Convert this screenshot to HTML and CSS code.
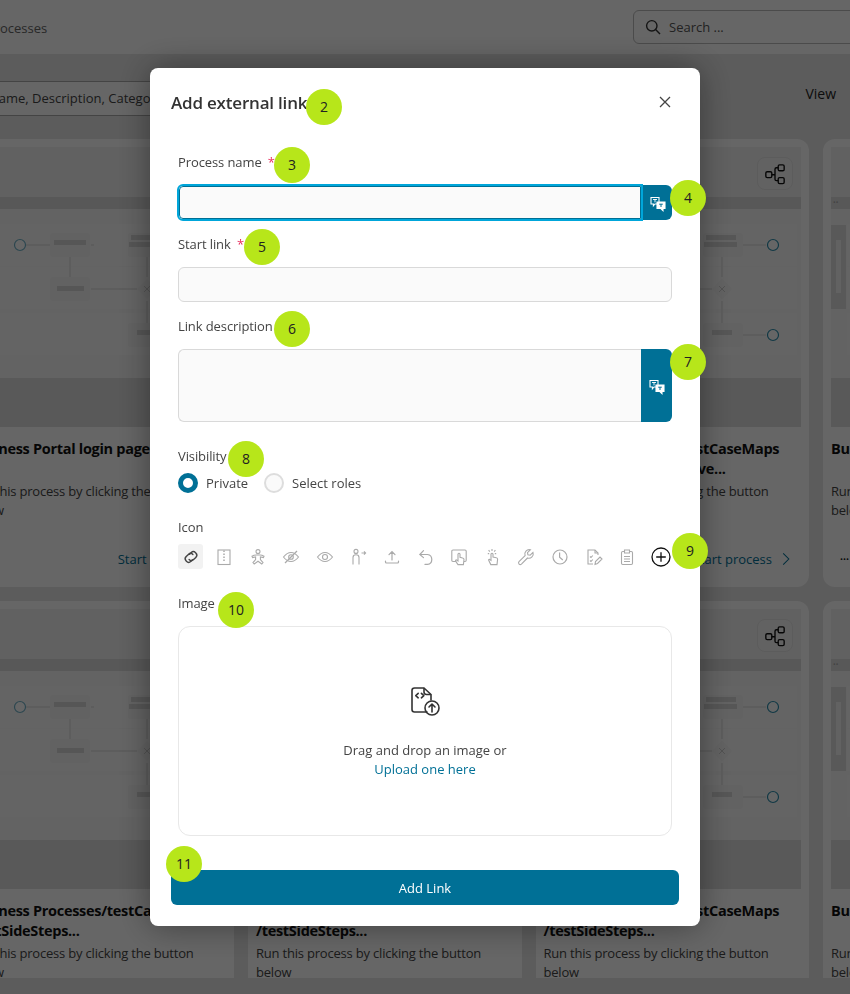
FILE: index.html
```html
<!DOCTYPE html>
<html>
<head>
    <title>Processes</title>
    <link rel="stylesheet" href="styles.css">
</head>
<body>
    <svg class="sprite" xmlns="http://www.w3.org/2000/svg">
        <symbol id="diagram" viewBox="0 0 258 169">
            <rect x="0" y="16" width="15" height="84" fill="#dedede"/>
            <rect x="5" y="31" width="5" height="53" fill="#f6f6f6"/>
            <rect x="16" y="15" width="237" height="42" fill="#fbfbfb"/>
            <rect x="16" y="58" width="237" height="42" fill="#fbfbfb"/>
            <rect x="16" y="104" width="237" height="42" fill="#fbfbfb"/>
            <g stroke="#e4e4e4" stroke-width="1.5" fill="none">
                <path d="M57 36H81M101 48V68M122 80H168M178 48V68M178 92V114M122 36H125M198 36H222M198 126H222"/>
            </g>
            <g fill="#f6f6f6">
                <rect x="81" y="24" width="40" height="24" rx="3"/>
                <rect x="81" y="68" width="40" height="24" rx="3"/>
                <rect x="159" y="24" width="40" height="24" rx="3"/>
                <rect x="159" y="114" width="40" height="24" rx="3"/>
                <path d="M178 70l10 10-10 10-10-10z"/>
            </g>
            <g fill="#d8d8d8">
                <rect x="85" y="31" width="32" height="5"/>
                <rect x="88" y="77" width="27" height="5"/>
                <rect x="162" y="26" width="30" height="5"/>
                <rect x="160" y="33" width="33" height="5"/>
                <rect x="168" y="121" width="20" height="5"/>
            </g>
            <path d="M175 77l6 6M181 77l-6 6" stroke="#cfcfcf" stroke-width="1" fill="none"/>
            <circle cx="51" cy="36" r="5.5" fill="#fff" stroke="#6fb0c6" stroke-width="1.2"/>
            <circle cx="229" cy="36" r="5.5" fill="#fff" stroke="#2b8cab" stroke-width="1.2"/>
            <circle cx="229" cy="126" r="5.5" fill="#fff" stroke="#2b8cab" stroke-width="1.2"/>
        </symbol>
        <symbol id="tree" viewBox="0 0 24 24">
            <g fill="none" stroke="currentColor" stroke-width="1.5">
                <rect x="2" y="9.5" width="6.5" height="6.5" rx="1.5"/>
                <rect x="15.5" y="2" width="6.5" height="6.5" rx="1.5"/>
                <rect x="15.5" y="16" width="6.5" height="6.5" rx="1.5"/>
                <path d="M8.5 12.8H12M15.5 5.2H13.5Q12 5.2 12 6.7V17.7Q12 19.2 13.5 19.2H15.5"/>
            </g>
        </symbol>
        <symbol id="translate" viewBox="0 0 16 16">
            <g fill="none" stroke="#fff" stroke-width="1.1">
                <path d="M1 1.5H9V8H5L3.4 9.8V8H1z"/>
                <path d="M7 6H15V12.5H13V14.6L10.8 12.5H7z" fill="#fff"/>
                <path d="M3 3.5H7M5 3V6.4M9 8H13M11 10.8L9.5 8.4" stroke-width=".9"/>
                <path d="M9.2 8.2H12.8M11 8.2V11" stroke="#007096" stroke-width="1"/>
            </g>
        </symbol>
        <symbol id="i-link" viewBox="0 0 18 18">
            <g fill="none" stroke="currentColor" stroke-width="1.4" stroke-linecap="round">
                <path d="M7.6 6.2l1.5-1.5a3.2 3.2 0 0 1 4.5 0l.2.2a3.2 3.2 0 0 1 0 4.5l-2.2 2.2a3.2 3.2 0 0 1-4.5 0"/>
                <path d="M10.4 11.8l-1.5 1.5a3.2 3.2 0 0 1-4.5 0l-.2-.2a3.2 3.2 0 0 1 0-4.5l2.2-2.2a3.2 3.2 0 0 1 4.5 0"/>
            </g>
        </symbol>
        <symbol id="i-zip" viewBox="0 0 18 18">
            <g fill="none" stroke="currentColor" stroke-width="1.1">
                <rect x="3" y="2" width="12" height="14.5"/>
                <path d="M9 2.5V4M9 5.5V7M9 8.5V10M9 11.5V13" stroke-width="1.5"/>
            </g>
        </symbol>
        <symbol id="i-body" viewBox="0 0 18 18">
            <g fill="none" stroke="currentColor" stroke-width="1.1">
                <circle cx="9" cy="3.6" r="2"/>
                <path d="M3 8.2Q5 7 7 7H11Q13 7 15 8.2L14.4 9.6L11.4 9V11.5L14 14.6L12.8 16L9 13.2L5.2 16L4 14.6L6.6 11.5V9L3.6 9.6z"/>
            </g>
        </symbol>
        <symbol id="i-eye-off" viewBox="0 0 18 18">
            <g fill="none" stroke="currentColor" stroke-width="1.1">
                <path d="M1.5 9Q5 4.5 9 4.5T16.5 9Q13 13.5 9 13.5T1.5 9z"/>
                <circle cx="9" cy="9" r="2.3"/>
                <path d="M3 15L15 3" stroke-width="1.2"/>
            </g>
        </symbol>
        <symbol id="i-eye" viewBox="0 0 18 18">
            <g fill="none" stroke="currentColor" stroke-width="1.1">
                <path d="M1.5 9Q5 4.5 9 4.5T16.5 9Q13 13.5 9 13.5T1.5 9z"/>
                <circle cx="9" cy="9" r="2.5"/>
            </g>
        </symbol>
        <symbol id="i-person" viewBox="0 0 18 18">
            <g fill="none" stroke="currentColor" stroke-width="1.1">
                <circle cx="7" cy="3.4" r="2"/>
                <path d="M4 16.5V9.5Q4 6.8 7 6.8T10 9.5V16.5"/>
                <path d="M12.5 5H16.5M15 3.4L16.6 5L15 6.6"/>
            </g>
        </symbol>
        <symbol id="i-upload" viewBox="0 0 18 18">
            <g fill="none" stroke="currentColor" stroke-width="1.2" stroke-linecap="round">
                <path d="M9 12V4M6 6.6L9 3.6L12 6.6"/>
                <path d="M2.5 13V14Q2.5 15 3.5 15H14.5Q15.5 15 15.5 14V13"/>
            </g>
        </symbol>
        <symbol id="i-undo" viewBox="0 0 18 18">
            <g fill="none" stroke="currentColor" stroke-width="1.2" stroke-linecap="round">
                <path d="M3.5 6.5H10.5A5 5 0 0 1 10.5 16.4H8"/>
                <path d="M6.5 2.6L2.8 6.5L6.5 9.6"/>
            </g>
        </symbol>
        <symbol id="i-touch" viewBox="0 0 18 18">
            <g fill="none" stroke="currentColor" stroke-width="1.1">
                <path d="M7 13.5H3Q1.8 13.5 1.8 12.3V3.2Q1.8 2 3 2H15Q16.2 2 16.2 3.2V12.3Q16.2 13.5 15 13.5H14"/>
                <path d="M8 6V13L6.6 12Q5.4 11.6 5.6 13L8 16.6H13.4L14 11.5Q14 10.2 12.6 10L10 9.4V6Q9 4.6 8 6z" fill="#fff"/>
            </g>
        </symbol>
        <symbol id="i-tap" viewBox="0 0 18 18">
            <g fill="none" stroke="currentColor" stroke-width="1.1">
                <path d="M7 6V12.4L5.6 11.4Q4.2 11 4.8 12.6L6.8 16.6H13L13.6 11.2Q13.6 10 12.4 9.8L9 9.1V6Q8 4.4 7 6z"/>
                <path d="M8 1V3M4.6 2.2L5.8 3.6M11.4 2.2L10.2 3.6M3.8 5.6H5.2M10.8 5.6H12.2"/>
            </g>
        </symbol>
        <symbol id="i-wrench" viewBox="0 0 18 18">
            <path d="M16 4.4L13.2 7.2L10.9 6.8L10.5 4.6L13.4 1.8A4.4 4.4 0 0 0 8.1 7.6L2 13.7A1.7 1.7 0 0 0 4.4 16.1L10.5 10A4.4 4.4 0 0 0 16 4.4z" fill="none" stroke="currentColor" stroke-width="1.1"/>
        </symbol>
        <symbol id="i-clock" viewBox="0 0 18 18">
            <g fill="none" stroke="currentColor" stroke-width="1.2">
                <circle cx="9" cy="9" r="7"/>
                <path d="M8.6 4.6V9.2L11.8 12"/>
            </g>
        </symbol>
        <symbol id="i-edit" viewBox="0 0 18 18">
            <g fill="none" stroke="currentColor" stroke-width="1.1">
                <path d="M13 7V5L10 2H3V16H8"/>
                <path d="M10 2V5H13"/>
                <path d="M5 8.5L6 9.5L7.8 7.5M5 12.5L6 13.5L7.8 11.5"/>
                <path d="M10 16.5L10.5 13.5L15 9L17 11L12.5 15.5z"/>
            </g>
        </symbol>
        <symbol id="i-clip" viewBox="0 0 18 18">
            <g fill="none" stroke="currentColor" stroke-width="1.1">
                <rect x="3.5" y="3.5" width="11" height="13" rx="1.2"/>
                <path d="M6.5 3.5V2H11.5V3.5V5H6.5z" fill="#fff"/>
                <path d="M6 8.5H12M6 11H12M6 13.5H12"/>
            </g>
        </symbol>
        <symbol id="i-plus" viewBox="0 0 20 20">
            <g fill="none" stroke="#111" stroke-width="1.3">
                <circle cx="10" cy="10" r="9"/>
                <path d="M10 5.2V14.8M5.2 10H14.8"/>
            </g>
        </symbol>
        <symbol id="i-file-up" viewBox="0 0 30 30">
            <g fill="none" stroke="#333" stroke-width="1.6" stroke-linecap="round" stroke-linejoin="round">
                <path d="M17 25H4.5Q2 25 2 22.5V3.5Q2 1 4.5 1H14L21 7.5V13"/>
                <path d="M14 1.5V5Q14 7.5 16.5 7.5H20.5"/>
                <path d="M8.2 6.4L5.8 8.6L8.2 10.8M11.4 6.4L13.8 8.6L11.4 10.8"/>
                <circle cx="22" cy="21" r="7"/>
                <path d="M22 25V17.4M19 20L22 17L25 20"/>
            </g>
        </symbol>
    </svg>

    <div class="page">
        <div class="topbar">
            <span class="crumb">Business Processes</span>
            <div class="search">
                <svg class="search-icon" viewBox="0 0 16 16"><circle cx="6.8" cy="6.8" r="5.2"/><path d="M10.6 10.6L15 15"/></svg>
                <span>Search ...</span>
            </div>
        </div>
        <div class="toolbar">
            <div class="filter">Name, Description, Category</div>
            <span class="view">View</span>
        </div>
        <div class="grid">
            <div class="card">
                <div class="preview">
                    <div class="preview-head"><span class="tree-btn"><svg><use href="#tree"/></svg></span></div>
                    <div class="band"></div>
                    <svg class="diagram"><use href="#diagram"/></svg>
                    <div class="band-low"></div>
                </div>
                <h3>Business Portal login page</h3>
                <p>Run this process by clicking the button below</p>
                <a class="start">Start process <svg viewBox="0 0 10 16"><path d="M1.5 1L8.5 8L1.5 15"/></svg></a>
            </div>
            <div class="card">
                <div class="preview">
                    <div class="preview-head"><span class="tree-btn"><svg><use href="#tree"/></svg></span></div>
                    <div class="band"></div>
                    <svg class="diagram"><use href="#diagram"/></svg>
                    <div class="band-low"></div>
                </div>
                <h3>Business Processes/testCaseMaps /testSideSteps...</h3>
                <p>Run this process by clicking the button below</p>
                <a class="start">Start process <svg viewBox="0 0 10 16"><path d="M1.5 1L8.5 8L1.5 15"/></svg></a>
            </div>
            <div class="card">
                <div class="preview">
                    <div class="preview-head"><span class="tree-btn"><svg><use href="#tree"/></svg></span></div>
                    <div class="band"></div>
                    <svg class="diagram"><use href="#diagram"/></svg>
                    <div class="band-low"></div>
                </div>
                <h3>Business Processes/testCaseMaps /testApproveMoveLeave...</h3>
                <p>Run this process by clicking the button below</p>
                <a class="start">Start process <svg viewBox="0 0 10 16"><path d="M1.5 1L8.5 8L1.5 15"/></svg></a>
            </div>
            <div class="card">
                <div class="preview">
                    <div class="preview-head"></div>
                    <div class="band"><span class="band-dots">••</span></div>
                    <svg class="diagram"><use href="#diagram"/></svg>
                    <div class="band-low"></div>
                </div>
                <h3>Business Processes /testCaseMaps</h3>
                <p>Run this process by clicking the button below</p>
                <a class="start start-loading">•••</a>
            </div>
            <div class="card">
                <div class="preview">
                    <div class="preview-head"><span class="tree-btn"><svg><use href="#tree"/></svg></span></div>
                    <div class="band"></div>
                    <svg class="diagram"><use href="#diagram"/></svg>
                    <div class="band-low"></div>
                </div>
                <h3>Business Processes/testCaseMaps /testSideSteps...</h3>
                <p>Run this process by clicking the button below</p>
            </div>
            <div class="card">
                <div class="preview">
                    <div class="preview-head"><span class="tree-btn"><svg><use href="#tree"/></svg></span></div>
                    <div class="band"></div>
                    <svg class="diagram"><use href="#diagram"/></svg>
                    <div class="band-low"></div>
                </div>
                <h3>Business Processes/testCaseMaps /testSideSteps...</h3>
                <p>Run this process by clicking the button below</p>
            </div>
            <div class="card">
                <div class="preview">
                    <div class="preview-head"><span class="tree-btn"><svg><use href="#tree"/></svg></span></div>
                    <div class="band"></div>
                    <svg class="diagram"><use href="#diagram"/></svg>
                    <div class="band-low"></div>
                </div>
                <h3>Business Processes/testCaseMaps /testSideSteps...</h3>
                <p>Run this process by clicking the button below</p>
            </div>
            <div class="card">
                <div class="preview">
                    <div class="preview-head"></div>
                    <div class="band"><span class="band-dots">••</span></div>
                    <svg class="diagram"><use href="#diagram"/></svg>
                    <div class="band-low"></div>
                </div>
                <h3>Business Processes /Business</h3>
                <p>Run this process by clicking the button below</p>
            </div>
        </div>
    </div>

    <div class="overlay">
        <div class="modal">
            <div class="modal-head">
                <h2>Add external link</h2>
                <svg class="close" viewBox="0 0 12 12"><path d="M1 1L11 11M11 1L1 11"/></svg>
            </div>
            <form class="modal-form">
                <div class="form-group">
                    <label>Process name <span class="req">*</span></label>
                    <div class="input-group">
                        <input type="text" class="input input-focus">
                        <button type="button" class="translate"><svg><use href="#translate"/></svg></button>
                    </div>
                </div>
                <div class="form-group">
                    <label>Start link <span class="req">*</span></label>
                    <input type="text" class="input">
                </div>
                <div class="form-group form-group-wide">
                    <label>Link description</label>
                    <div class="input-group">
                        <textarea class="input textarea"></textarea>
                        <button type="button" class="translate"><svg><use href="#translate"/></svg></button>
                    </div>
                </div>
                <div class="form-group form-group-wide">
                    <label class="label-tight">Visibility</label>
                    <div class="radios">
                        <span class="radio radio-on"></span><span class="radio-text">Private</span>
                        <span class="radio"></span><span class="radio-text">Select roles</span>
                    </div>
                </div>
                <div class="form-group form-group-wide">
                    <label class="label-tight">Icon</label>
                    <div class="icons">
                        <span class="icon icon-active"><svg><use href="#i-link"/></svg></span>
                        <span class="icon"><svg><use href="#i-zip"/></svg></span>
                        <span class="icon"><svg><use href="#i-body"/></svg></span>
                        <span class="icon"><svg><use href="#i-eye-off"/></svg></span>
                        <span class="icon"><svg><use href="#i-eye"/></svg></span>
                        <span class="icon"><svg><use href="#i-person"/></svg></span>
                        <span class="icon"><svg><use href="#i-upload"/></svg></span>
                        <span class="icon"><svg><use href="#i-undo"/></svg></span>
                        <span class="icon"><svg><use href="#i-touch"/></svg></span>
                        <span class="icon"><svg><use href="#i-tap"/></svg></span>
                        <span class="icon"><svg><use href="#i-wrench"/></svg></span>
                        <span class="icon"><svg><use href="#i-clock"/></svg></span>
                        <span class="icon"><svg><use href="#i-edit"/></svg></span>
                        <span class="icon"><svg><use href="#i-clip"/></svg></span>
                        <span class="icon icon-add"><svg><use href="#i-plus"/></svg></span>
                    </div>
                </div>
                <div class="form-group">
                    <label>Image</label>
                    <div class="dropzone">
                        <svg class="dropzone-icon"><use href="#i-file-up"/></svg>
                        <div>Drag and drop an image or</div>
                        <a class="upload">Upload one here</a>
                    </div>
                </div>
            </form>
            <button type="button" class="submit">Add Link</button>
        </div>

        <!-- numbered callouts on top of the dialog -->
        <span class="pin pin-2">2</span>
        <span class="pin pin-3">3</span>
        <span class="pin pin-4">4</span>
        <span class="pin pin-5">5</span>
        <span class="pin pin-6">6</span>
        <span class="pin pin-7">7</span>
        <span class="pin pin-8">8</span>
        <span class="pin pin-9">9</span>
        <span class="pin pin-10">10</span>
        <span class="pin pin-11">11</span>
    </div>
</body>
</html>
```

FILE: styles.css
```css
html,
body {
    margin: 0;
    height: 994px;
    overflow: hidden;
}

body {
    background-color: #e6e6e6;
    font-family: 'Open Sans', 'Noto Sans', sans-serif;
    font-size: 13px;
    color: #333;
}

.sprite {
    display: none;
}

/* page behind the dialog, scrolled a little to the right */
.page {
    width: 936px;
    height: 978px;
    margin-left: -40px;
    overflow: hidden;
}

.topbar {
    height: 54px;
    box-sizing: border-box;
    background-color: #fff;
    display: flex;
    justify-content: space-between;
    align-items: flex-start;
}

.crumb {
    margin-top: 19px;
    margin-left: -30px;
    color: #666;
}

.search {
    margin-top: 10px;
    margin-right: 0;
    width: 263px;
    height: 34px;
    box-sizing: border-box;
    border: 1px solid #bbb;
    border-radius: 6px 0 0 6px;
    display: flex;
    align-items: center;
    gap: 8px;
    padding-left: 11px;
    color: #555;
}

.search-icon {
    width: 16px;
    height: 16px;
    fill: none;
    stroke: #333;
    stroke-width: 1.4;
}

.toolbar {
    height: 85px;
    box-sizing: border-box;
    display: flex;
    justify-content: space-between;
    padding-top: 27px;
}

.filter {
    width: 520px;
    height: 35px;
    box-sizing: border-box;
    margin-left: 0;
    padding: 7px 0 0 29px;
    border-top: 1px solid #aaa;
    border-bottom: 1px solid #aaa;
    background-color: #fff;
    color: #444;
}

.view {
    margin-top: 3px;
    margin-right: 60px;
    color: #222;
    font-size: 14px;
}

.grid {
    display: grid;
    grid-template-columns: repeat(4, 273.5px);
    gap: 14px;
    padding-left: 0.5px;
}

.card {
    height: 448px;
    box-sizing: border-box;
    padding: 8px;
    background-color: #fff;
    border-radius: 12px;
}

.preview {
    height: 280px;
    background-color: #f8f8f8;
    display: flex;
    flex-direction: column;
}

.preview-head {
    height: 50px;
    background-color: #f3f3f3;
    display: flex;
    justify-content: flex-end;
    padding: 10px 8px 0 0;
    box-sizing: border-box;
}

.tree-btn {
    width: 36px;
    height: 33px;
    box-sizing: border-box;
    border: 1px solid #e6e6e6;
    border-radius: 8px;
    background-color: #f6f6f6;
    display: flex;
    align-items: center;
    justify-content: center;
    color: #111;
}

.tree-btn svg {
    width: 22px;
    height: 22px;
}

.band {
    height: 12px;
    background-color: #dcdcdc;
    line-height: 12px;
    font-size: 7px;
    color: #aaa;
}

.band-dots {
    margin-left: 2px;
}

.diagram {
    width: 258px;
    height: 169px;
    display: block;
}

.band-low {
    height: 49px;
    background-color: #dedede;
}

.card h3 {
    margin: 12px 0 3px;
    height: 40px;
    font-size: 14.5px;
    line-height: 19.5px;
    font-weight: 700;
    color: #111;
    letter-spacing: -0.3px;
}

.card p {
    margin: 0;
    height: 38px;
    font-size: 13px;
    line-height: 19px;
    color: #444;
    letter-spacing: -0.2px;
}

.start {
    margin-top: 29px;
    padding-right: 11px;
    display: flex;
    justify-content: flex-end;
    align-items: center;
    gap: 10px;
    font-size: 13px;
    line-height: 20px;
    color: #007096;
}

.start svg {
    width: 8px;
    height: 14px;
    fill: none;
    stroke: #007096;
    stroke-width: 1.3;
}

.start-loading {
    justify-content: flex-start;
    padding-left: 9px;
    color: #222;
    font-size: 8px;
}

.overlay {
    position: fixed;
    left: 0;
    top: 0;
    width: 850px;
    height: 994px;
    background-color: rgba(0, 0, 0, 0.6);
}

.modal {
    position: absolute;
    left: 150px;
    top: 68px;
    width: 550px;
    height: 858px;
    box-sizing: border-box;
    padding: 22px 21px 21px;
    background-color: #fff;
    border-radius: 8px;
    box-shadow: 0 0 34px rgba(0, 0, 0, 0.4);
    display: flex;
    flex-direction: column;
}

.modal-head {
    height: 24px;
    margin-bottom: 38px;
    display: flex;
    justify-content: space-between;
    align-items: center;
}

.modal-head h2 {
    margin: 0;
    font-size: 17px;
    font-weight: 600;
    color: #333;
    letter-spacing: -0.2px;
}

.close {
    width: 12px;
    height: 12px;
    margin-right: 8px;
    fill: none;
    stroke: #444;
    stroke-width: 1.3;
}

.modal-form {
    padding: 0 7px;
    flex: 1;
}

.form-group {
    margin-bottom: 14px;
}

.form-group-wide {
    margin-bottom: 24px;
}

.form-group label {
    display: block;
    height: 20px;
    line-height: 20px;
    margin-bottom: 13px;
    color: #444;
    letter-spacing: -0.1px;
}

.form-group .label-tight {
    margin-bottom: 7px;
}

.req {
    color: #e8305f;
    margin-left: 3px;
}

.input-group {
    display: flex;
}

.input {
    display: block;
    width: 100%;
    height: 35px;
    box-sizing: border-box;
    padding: 0 10px;
    background-color: #fafafa;
    border: 1px solid #d9d9d9;
    border-radius: 6px;
    font-family: inherit;
    outline: none;
}

.input-group .input {
    flex: 1;
    width: auto;
    min-width: 0;
}

.input-group .input-focus {
    border: 1px solid #006f94;
    border-radius: 4px 0 0 4px;
    outline: 2px solid #00a6da;
    outline-offset: 0;
    margin: 1px;
    height: 33px;
}

.textarea {
    height: 73px;
    resize: none;
    border-radius: 6px 0 0 6px;
    border-right: none;
}

.translate {
    width: 31px;
    padding: 0;
    border: none;
    border-radius: 0 6px 6px 0;
    background-color: #007096;
    display: flex;
    align-items: center;
    justify-content: center;
}

.translate svg {
    width: 16px;
    height: 16px;
    margin-top: 2px;
}

.input-group .input-focus + .translate {
    width: 29px;
    margin-left: 1px;
}

.radios {
    height: 20px;
    display: flex;
    align-items: center;
}

.radio {
    width: 20px;
    height: 20px;
    box-sizing: border-box;
    border: 2px solid #ddd;
    border-radius: 50%;
    background-color: #fafafa;
    margin-right: 8px;
}

.radio-on {
    border: 5px solid #007096;
    background-color: #fff;
}

.radio-text {
    margin-right: 16px;
    color: #444;
}

.icons {
    display: flex;
    align-items: center;
    height: 25px;
    color: #aaa;
}

.icon {
    width: 25px;
    height: 25px;
    margin-right: 8.6px;
    display: flex;
    align-items: center;
    justify-content: center;
    flex: none;
}

.icon svg {
    width: 18px;
    height: 18px;
}

.icon-active {
    background-color: #f2f2f2;
    border-radius: 3px;
    color: #444;
}

.icon-add svg {
    width: 20px;
    height: 20px;
}

.dropzone {
    height: 210px;
    box-sizing: border-box;
    padding-top: 60px;
    border: 1px solid #e8e8e8;
    border-radius: 12px;
    display: flex;
    flex-direction: column;
    align-items: center;
    line-height: 19px;
    color: #444;
}

.dropzone-icon {
    width: 30px;
    height: 30px;
    margin-bottom: 24px;
}

.upload {
    color: #007096;
}

.submit {
    height: 35px;
    border: none;
    border-radius: 6px;
    background-color: #007096;
    color: #fff;
    font-family: inherit;
    font-size: 13px;
}

.pin {
    position: absolute;
    width: 36px;
    height: 36px;
    border-radius: 50%;
    background-color: #b7e61a;
    color: #222;
    font-size: 14px;
    line-height: 36px;
    text-align: center;
}

.pin-2 { left: 306px; top: 89px; }
.pin-3 { left: 274px; top: 147px; }
.pin-4 { left: 670px; top: 180px; }
.pin-5 { left: 244px; top: 229px; }
.pin-6 { left: 274px; top: 311px; }
.pin-7 { left: 670px; top: 344px; }
.pin-8 { left: 228px; top: 441px; }
.pin-9 { left: 672px; top: 533px; }
.pin-10 { left: 218px; top: 592px; }
.pin-11 { left: 166px; top: 846px; }
```
